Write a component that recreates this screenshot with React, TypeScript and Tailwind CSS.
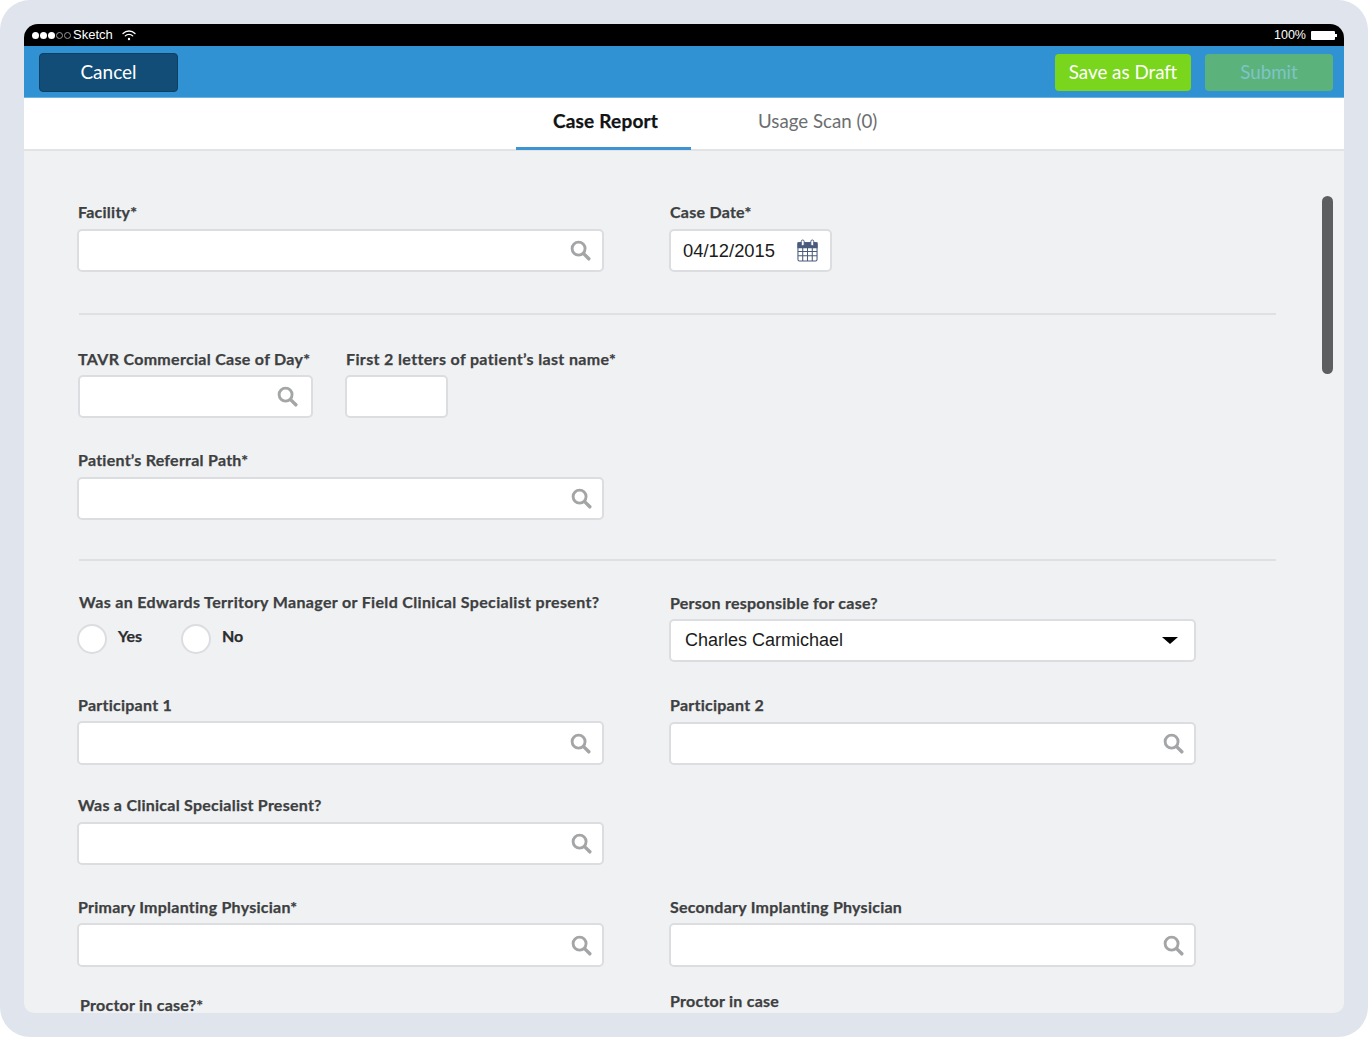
const SearchIcon = () => (
  <svg width="21" height="21" viewBox="0 0 22 22" fill="none" stroke="#a3a5a6" strokeWidth="3" strokeLinecap="round">
    <circle cx="9" cy="9" r="6.8" />
    <path d="M14.500 14.500l5.200 5.200" strokeWidth="3.600" />
  </svg>
)

const CalendarIcon = () => (
  <svg width="21" height="23" viewBox="0 0 22 24" fill="none" stroke="#4a5b7c" strokeWidth="1.1">
    <rect x="1" y="4" width="20" height="19" rx="1.5" />
    <path d="M1 4h20v5H1z" fill="#4a5b7c" />
    <path d="M1 13h20M1 17.500h20M6 9v14M11 9v14M16 9v14" />
    <rect x="4.500" y="1" width="3" height="6" rx="1.500" fill="#fff" strokeWidth="1" />
    <rect x="14.500" y="1" width="3" height="6" rx="1.500" fill="#fff" strokeWidth="1" />
  </svg>
)

const WifiIcon = () => (
  <svg width="14" height="11" viewBox="0 0 14 11" fill="none" stroke="#fff" strokeWidth="1.300" strokeLinecap="round">
    <path d="M1 3.500a8.500 8.500 0 0 1 12 0" />
    <path d="M3.300 5.900a5.200 5.200 0 0 1 7.400 0" />
    <circle cx="7" cy="9" r="1.200" fill="#fff" stroke="none" />
  </svg>
)

function Label({ children, className = 'ml-[1px]', tracking = 'tracking-[0.25px]' }: { children: React.ReactNode; className?: string; tracking?: string }) {
  return <div className={`h-[18px] text-[16px] leading-[18px] font-bold text-[#3d3f41] [-webkit-text-stroke:0.25px_#3d3f41] whitespace-nowrap ${tracking} ${className}`}>{children}</div>
}

function SearchInput({ className = 'w-[527px] h-[43px]', iconPad = 'pr-[10px]' }: { className?: string; iconPad?: string }) {
  return (
    <div className={`bg-white border-2 border-[#dcdde0] rounded-[5px] flex items-center justify-end ${iconPad} ${className}`}>
      <SearchIcon />
    </div>
  )
}

// tall rows sit a pixel higher in the reference and are a pixel taller
function Field({ label, tall = false, iconPad }: { label: string; tall?: boolean; iconPad?: string }) {
  return (
    <div>
      <Label>{label}</Label>
      <div className={tall ? 'mt-[7px]' : 'mt-2'}>
        <SearchInput className={tall ? 'w-[527px] h-[44px]' : 'w-[527px] h-[43px]'} iconPad={iconPad} />
      </div>
    </div>
  )
}

function Radio({ label }: { label: string }) {
  return (
    <div className="flex items-start gap-[11px]">
      <div className="w-[30px] h-[30px] rounded-full bg-white border-2 border-[#dcdde0]" />
      <span className="text-[16px] leading-[18px] font-bold text-[#2b2d2f] [-webkit-text-stroke:0.25px_#2b2d2f] mt-[3px]">{label}</span>
    </div>
  )
}

export default function App() {
  return (
    <div className="w-[1368px] h-[1037px] bg-white overflow-hidden font-['Lato',sans-serif]">
      <div className="w-full h-full bg-[#e0e4ec] rounded-[30px] p-6">
        <div className="h-[989px] bg-[#f0f1f3] rounded-t-[14px] rounded-b-[10px] overflow-hidden flex flex-col relative">
          {/* status bar */}
          <div className="h-[22px] bg-black text-white text-[13px] flex items-center justify-between pl-2 pr-[7px] font-['Liberation_Sans',sans-serif] shrink-0">
            <div className="flex items-center">
              <div className="flex gap-[1px]">
                <span className="w-[7px] h-[7px] rounded-full bg-white" />
                <span className="w-[7px] h-[7px] rounded-full bg-white" />
                <span className="w-[7px] h-[7px] rounded-full bg-white" />
                <span className="w-[7px] h-[7px] rounded-full border border-[#999]" />
                <span className="w-[7px] h-[7px] rounded-full border border-[#999]" />
              </div>
              <span className="ml-[2px]">Sketch</span>
              <span className="ml-[9px]"><WifiIcon /></span>
            </div>
            <div className="flex items-center gap-[5px] text-[12.500px]">
              <span>100%</span>
              <div className="flex items-center">
                <div className="w-[24px] h-[9px] bg-white rounded-[1px]" />
                <div className="w-[2px] h-[3px] bg-white" />
              </div>
            </div>
          </div>

          {/* action bar */}
          <div className="h-[52px] bg-[#3092d3] flex items-center pt-[1px] pl-[15px] pr-[11px] shrink-0 border-b border-[#6db3e2]">
            <button className="w-[139px] h-[39px] bg-[#114d76] border border-[#0e3f61] rounded-[4px] text-white text-[19px] font-normal">Cancel</button>
            <div className="ml-auto flex gap-[14px]">
              <button className="w-[136px] h-[37px] bg-[#7ad61d] rounded-[4px] text-white text-[18.800px]">Save as Draft</button>
              <button className="w-[128px] h-[37px] bg-[#5cb27b] rounded-[4px] text-[#7ec4c8] text-[18.800px]">Submit</button>
            </div>
          </div>

          {/* tabs */}
          <div className="h-[53px] bg-white border-b-2 border-[#e2e3e5] flex shrink-0 pl-[492px]">
            <div className="w-[175px] h-[52px] border-b-[3px] border-[#3d94d1] flex items-center justify-center pl-[4px] pb-[3px] text-[19px] tracking-[0.2px] font-bold text-[#111315] [-webkit-text-stroke:0.25px_#111315]">Case Report</div>
            <div className="ml-[67px] h-[52px] flex items-center pb-[5px] text-[18.700px] text-[#6b6e70]">Usage Scan (0)</div>
          </div>

          {/* form */}
          <div className="flex-1 overflow-hidden pl-[53px] pt-[52px]">
            <div className="flex gap-[65px]">
              <Field label="Facility*" iconPad="pr-[11px]" />
              <div>
                <Label>Case Date*</Label>
                <div className="mt-2 w-[163px] h-[43px] bg-white border-2 border-[#dcdde0] rounded-[5px] flex items-center justify-between pl-3 pr-3 font-['Liberation_Sans',sans-serif] text-[18.400px] text-[#1b1b1b]">
                  <span>04/12/2015</span>
                  <CalendarIcon />
                </div>
              </div>
            </div>

            <div className="ml-[2px] mt-[41px] w-[1197px] h-[2px] bg-[#dfe0e2]" />

            <div className="mt-[35px] flex ml-[1px]">
              <div className="w-[235px]">
                <Label className="ml-0" tracking="tracking-[0.3px]">TAVR Commercial Case of Day*</Label>
                <div className="mt-[7px]">
                  <SearchInput className="w-[235px] h-[43px]" iconPad="pr-[13px]" />
                </div>
              </div>
              <div className="ml-[32px]">
                <Label tracking="tracking-[0.36px]">First 2 letters of patient’s last name*</Label>
                <div className="mt-[7px] w-[103px] h-[43px] bg-white border-2 border-[#dcdde0] rounded-[5px]" />
              </div>
            </div>

            <div className="mt-[33px]">
              <Field label="Patient’s Referral Path*" />
            </div>

            <div className="ml-[2px] mt-[39px] w-[1197px] h-[2px] bg-[#dfe0e2]" />

            <div className="mt-[32px] flex gap-[65px]">
              <div className="w-[527px]">
                <Label className="ml-[2px]" tracking="tracking-[0.34px]">Was an Edwards Territory Manager or Field Clinical Specialist present?</Label>
                <div className="mt-[13px] flex">
                  <div className="w-[104px]">
                    <Radio label="Yes" />
                  </div>
                  <Radio label="No" />
                </div>
              </div>
              <div className="mt-[1px]">
                <Label>Person responsible for case?</Label>
                <div className="mt-[7px] w-[527px] h-[43px] bg-white border-2 border-[#dcdde0] rounded-[5px] flex items-center justify-between pl-[14px] pr-[16px] font-['Liberation_Sans',sans-serif] text-[18px] text-[#1b1b1b]">
                  <span>Charles Carmichael</span>
                  <span className="w-0 h-0 border-x-[8px] border-x-transparent border-t-[7px] border-t-black" />
                </div>
              </div>
            </div>

            <div className="mt-[34px] flex gap-[65px]">
              <Field label="Participant 1" tall iconPad="pr-[11px]" />
              <Field label="Participant 2" />
            </div>

            <div className="mt-[31px]">
              <Field label="Was a Clinical Specialist Present?" />
            </div>

            <div className="mt-[33px] flex gap-[65px]">
              <Field label="Primary Implanting Physician*" tall />
              <Field label="Secondary Implanting Physician" tall />
            </div>

            <div className="mt-[25px] flex gap-[65px] items-start">
              <div className="w-[527px] pt-[4px]">
                <Label className="ml-[3px]">Proctor in case?*</Label>
              </div>
              <Label>Proctor in case</Label>
            </div>
          </div>

          {/* scrollbar */}
          <div className="absolute top-[172px] right-[11px] w-[11px] h-[178px] rounded-full bg-[#5c5e5f]" />
        </div>
      </div>
    </div>
  )
}
